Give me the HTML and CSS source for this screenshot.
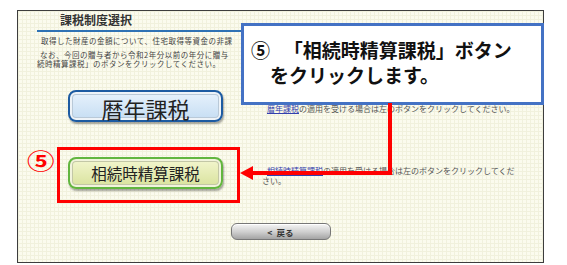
FILE: index.html
```html
<!DOCTYPE html>
<html lang="ja">
<head>
    <meta charset="UTF-8">
    <meta name="viewport" content="width=device-width, initial-scale=1.0">
    <title>課税制度選択</title>
    <link rel="stylesheet" href="styles.css">
</head>
<body>
    <div class="page">
        <div class="frame">
            <h2 class="title">課税制度選択</h2>
            <div class="rule"></div>
            <p class="lead first">取得した財産の金額について、住宅取得等資金の非課</p>
            <p class="lead second">なお、今回の贈与者から令和2年分以前の年分に贈与<br>続時精算課税」のボタンをクリックしてください。</p>

            <div class="choices">
                <button class="choice calendar">暦年課税</button>
                <div class="desc"><a href="#">暦年課税</a>の適用を受ける場合は左のボタンをクリックしてください。</div>

                <button class="choice settlement">相続時精算課税</button>
                <div class="desc"><a href="#">相続時精算課税</a>の適用を受ける場合は左のボタンをクリックしてください。</div>
            </div>

            <div class="back-row">
                <button class="back">&lt;&ensp;戻る</button>
            </div>
        </div>

        <!-- 説明用の注記 -->
        <div class="callout">⑤&ensp;&nbsp;「相続時精算課税」ボタン<br>　をクリックします。</div>
        <div class="mark">⑤</div>
        <div class="highlight"></div>
        <svg class="arrow" width="156" height="80" viewBox="0 0 156 80">
            <polyline points="152,0 152,70 12,70" fill="none" stroke="#ff0000" stroke-width="4"/>
            <polygon points="2,70 15,63 15,77" fill="#ff0000"/>
        </svg>
    </div>
</body>
</html>
```

FILE: styles.css
```css
body {
    margin: 0;
    background: #fff;
    font-family: "Noto Sans CJK JP", "Noto Sans", sans-serif;
    color: #444;
}
.page {
    position: relative;
    width: 567px;
    height: 265px;
    padding: 10px 0 0 17px;
    box-sizing: border-box;
    overflow: hidden;
}
.frame {
    width: 527px;
    height: 253px;
    box-sizing: border-box;
    border: 1px solid #3d3d3d;
    background-color: #fbfbee;
    background-image:
        linear-gradient(#f1f1dd 1px, transparent 1px),
        linear-gradient(90deg, #f1f1dd 1px, transparent 1px);
    background-size: 4px 4px;
}
.title {
    margin: 0;
    padding: 1px 0 0 42px;
    font-size: 12px;
    line-height: 16px;
    font-weight: bold;
    color: #333;
}
.rule {
    height: 2px;
    margin: 2px 19px 0;
    background: #2f72b4;
}
.lead {
    margin: 5px 0 0 19px;
    font-size: 7.5px;
    letter-spacing: 0.5px;
    line-height: 8px;
    white-space: nowrap;
}
.lead.first {
    text-indent: 4px;
}
.lead.second {
    margin-top: 5px;
    line-height: 9px;
    text-indent: 3px;
}
.choices {
    display: grid;
    grid-template-columns: 155px 255px;
    column-gap: 39px;
    row-gap: 35px;
    align-items: center;
    margin: 22px 0 0 50px;
}
.choice {
    height: 32px;
    padding: 0;
    border-radius: 8px;
    font-family: "Noto Sans CJK JP", sans-serif;
    color: #222;
    cursor: pointer;
}
.calendar {
    border: 2px solid #1d5ba2;
    background: linear-gradient(#e8f2fc, #c5ddf3);
    box-shadow: inset 0 0 0 2px #eef3f8, inset 0 0 0 3px #b9c9d8, 1px 2px 2px rgba(0, 0, 0, 0.35);
    font-size: 22px;
}
.settlement {
    border: 2px solid #62b640;
    background: linear-gradient(#f3f6cf, #d8e29c);
    box-shadow: inset 0 0 0 2px #f1f3dc, inset 0 0 0 3px #c3c7a6, 1px 2px 2px rgba(0, 0, 0, 0.35);
    font-size: 15.5px;
}
.desc {
    padding-top: 5px;
    font-size: 8px;
    line-height: 10px;
    text-indent: 5px;
    color: #555;
}
.desc a {
    color: #3340ad;
}
.back-row {
    display: flex;
    justify-content: center;
    margin-top: 34px;
}
.back {
    width: 100px;
    height: 17px;
    padding: 0;
    border: 1px solid #777;
    border-radius: 6px;
    background: linear-gradient(#f6f6f6, #cdcdcd 55%, #a4a4a4);
    box-shadow: inset 0 1px 0 #fff;
    font-family: "Noto Sans CJK JP", sans-serif;
    font-size: 8.5px;
    font-weight: bold;
    color: #333;
}
.callout {
    position: absolute;
    left: 241px;
    top: 23px;
    width: 303px;
    height: 82px;
    box-sizing: border-box;
    padding: 11px 0 0 7px;
    border: 3px solid #4472c4;
    background: #fff;
    font-size: 19px;
    line-height: 25px;
    font-weight: bold;
    color: #111;
    white-space: nowrap;
}
.mark {
    position: absolute;
    left: 27px;
    top: 148px;
    font-size: 22px;
    line-height: 22px;
    font-weight: bold;
    color: #ff0000;
    transform: scaleX(1.25);
    transform-origin: left center;
}
.highlight {
    position: absolute;
    left: 57px;
    top: 147px;
    width: 183px;
    height: 56px;
    box-sizing: border-box;
    border: 3px solid #ff0000;
}
.arrow {
    position: absolute;
    left: 238px;
    top: 103px;
}
```
